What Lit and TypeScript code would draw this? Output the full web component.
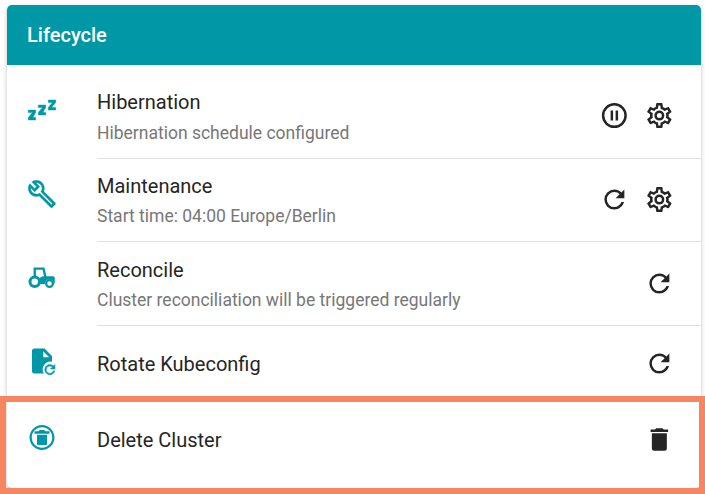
import { LitElement, html, css, svg, nothing } from "lit";
import { customElement, property } from "lit/decorators.js";

const cog = svg`<path d="M12,8A4,4 0 0,1 16,12A4,4 0 0,1 12,16A4,4 0 0,1 8,12A4,4 0 0,1 12,8M12,10A2,2 0 0,0 10,12A2,2 0 0,0 12,14A2,2 0 0,0 14,12A2,2 0 0,0 12,10M10,22C9.75,22 9.54,21.82 9.5,21.58L9.13,18.93C8.5,18.68 7.96,18.34 7.44,17.94L4.95,18.95C4.73,19.03 4.46,18.95 4.34,18.73L2.34,15.27C2.21,15.05 2.27,14.78 2.46,14.63L4.57,12.97L4.5,12L4.57,11L2.46,9.37C2.27,9.22 2.21,8.95 2.34,8.73L4.34,5.27C4.46,5.05 4.73,4.96 4.95,5.05L7.44,6.05C7.96,5.66 8.5,5.32 9.13,5.07L9.5,2.42C9.54,2.18 9.75,2 10,2H14C14.25,2 14.46,2.18 14.5,2.42L14.87,5.07C15.5,5.32 16.04,5.66 16.56,6.05L19.05,5.05C19.27,4.96 19.54,5.05 19.66,5.27L21.66,8.73C21.79,8.95 21.73,9.22 21.54,9.37L19.43,11L19.5,12L19.43,13L21.54,14.63C21.73,14.78 21.79,15.05 21.66,15.27L19.66,18.73C19.54,18.95 19.27,19.04 19.05,18.95L16.56,17.95C16.04,18.34 15.5,18.68 14.87,18.93L14.5,21.58C14.46,21.82 14.25,22 14,22H10M11.25,4L10.88,6.61C9.68,6.86 8.62,7.5 7.85,8.39L5.44,7.35L4.69,8.65L6.8,10.2C6.4,11.37 6.4,12.64 6.8,13.8L4.68,15.36L5.43,16.66L7.86,15.62C8.63,16.5 9.68,17.14 10.87,17.38L11.24,20H12.76L13.13,17.39C14.32,17.14 15.37,16.5 16.14,15.62L18.57,16.66L19.32,15.36L17.2,13.81C17.6,12.64 17.6,11.37 17.2,10.2L19.31,8.65L18.56,7.35L16.15,8.39C15.38,7.5 14.32,6.86 13.12,6.62L12.75,4H11.25Z"/>`;
const refresh = svg`<path d="M17.65,6.35C16.2,4.9 14.21,4 12,4A8,8 0 0,0 4,12A8,8 0 0,0 12,20C15.73,20 18.84,17.45 19.73,14H17.65C16.83,16.33 14.61,18 12,18A6,6 0 0,1 6,12A6,6 0 0,1 12,6C13.66,6 15.14,6.69 16.22,7.78L13,11H20V4L17.65,6.35Z"/>`;

const icons: Record<string, unknown> = {
  cog,
  refresh,
  pause: svg`<path d="M13,16V8H15V16H13M9,16V8H11V16H9M12,2A10,10 0 0,1 22,12A10,10 0 0,1 12,22A10,10 0 0,1 2,12A10,10 0 0,1 12,2M12,4A8,8 0 0,0 4,12A8,8 0 0,0 12,20A8,8 0 0,0 20,12A8,8 0 0,0 12,4Z"/>`,
  trash: svg`<path d="M19,4H15.5L14.5,3H9.5L8.5,4H5V6H19M6,19A2,2 0 0,0 8,21H16A2,2 0 0,0 18,19V7H6V19Z"/>`,
  sleep: svg`<path stroke="currentColor" stroke-width=".35" d="M23,12H17V10L20.39,6H17V4H23V6L19.62,10H23V12M15,16H9V14L12.39,10H9V8H15V10L12.62,14H15V16M7,20H1V18L4.39,14H1V12H7V14L4.62,18H7V20Z"/>`,
  wrench: svg`<path stroke="currentColor" stroke-width=".2" d="M22.61,19L13.53,9.91C14.46,7.57 14,4.81 12.09,2.91C9.79,0.61 6.21,0.4 3.66,2.26L7.5,6.11L6.08,7.52L2.25,3.69C0.39,6.23 0.6,9.82 2.9,12.11C4.76,13.97 7.47,14.46 9.79,13.59L18.9,22.7C19.29,23.09 19.92,23.09 20.31,22.7L22.61,20.4C23,20 23,19.39 22.61,19M19.61,20.59L10.15,11.13C9.54,11.58 8.86,11.85 8.15,11.94C6.79,12.12 5.36,11.72 4.32,10.68C3.37,9.74 2.93,8.5 3,7.26L6.09,10.35L10.33,6.11L7.24,3C8.48,2.95 9.73,3.39 10.68,4.33C11.76,5.41 12.17,6.9 11.92,8.29C11.8,9 11.5,9.66 11.04,10.25L20.5,19.7L19.61,20.59Z"/>`,
  tractor: svg`
    <path d="M6.2,11.5V4.8H13.2L14.8,12" fill="none" stroke="currentColor" stroke-width="1.9"/>
    <path d="M9.6,12.6L12.6,11H21.2L22.2,12V16.8H21.4A3.5,3.5 0 0 0 14.4,16.8V17.2H10.4Z"/>
    <path fill-rule="evenodd" d="M6.2,10.4A5,5 0 1 1 6.2,20.4A5,5 0 1 1 6.2,10.4M6.2,12.8A2.6,2.6 0 1 0 6.2,18A2.6,2.6 0 1 0 6.2,12.8Z"/>
    <path fill-rule="evenodd" d="M18,13.2A3.6,3.6 0 1 1 18,20.4A3.6,3.6 0 1 1 18,13.2M18,15A1.8,1.8 0 1 0 18,18.6A1.8,1.8 0 1 0 18,15Z"/>`,
  fileRefresh: svg`<path fill-rule="evenodd" d="M14,2H6A2,2 0 0,0 4,4V20A2,2 0 0,0 6,22H13.4A6.4,6.4 0 0 1 20,12.5V8L14,2M13,4.2L17.8,9H13V4.2Z"/><g transform="translate(18.3 18.9) scale(.5) translate(-12 -12)" stroke="currentColor" stroke-width="1.1">${refresh}</g>`,
  deleteCircle: svg`<path d="M12 20.2C16.5 20.2 20.2 16.5 20.2 12S16.5 3.8 12 3.8 3.8 7.5 3.8 12 7.5 20.2 12 20.2M12 2C17.5 2 22 6.5 22 12S17.5 22 12 22 2 17.5 2 12C2 6.5 6.5 2 12 2M18 6.9V9H6V6.9H9.2L10.2 6H13.8L14.8 6.9H18M9 18C8.4 18 8 17.6 8 17V9.8H16V17C16 17.6 15.6 18 15 18H9Z"/>`,
};

@customElement("mdi-icon")
class MdiIcon extends LitElement {
  @property() name = "";
  static styles = css`
    :host { display: block; width: 30px; height: 30px; flex: none; }
    .glyph { display: block; width: 30px; height: 30px; fill: currentColor; }
  `;
  render() {
    return html`<svg class="glyph" viewBox="0 0 24 24">${icons[this.name]}</svg>`;
  }
}

interface Row {
  icon: string;
  title: string;
  note?: string;
  actions: string[];
}

const rows: Row[] = [
  { icon: "sleep", title: "Hibernation", note: "Hibernation schedule configured", actions: ["pause", "cog"] },
  { icon: "wrench", title: "Maintenance", note: "Start time: 04:00 Europe/Berlin", actions: ["refresh", "cog"] },
  { icon: "tractor", title: "Reconcile", note: "Cluster reconciliation will be triggered regularly", actions: ["refresh"] },
  { icon: "fileRefresh", title: "Rotate Kubeconfig", actions: ["refresh"] },
  { icon: "deleteCircle", title: "Delete Cluster", actions: ["trash"] },
];

@customElement("app-root")
class AppRoot extends LitElement {
  static styles = css`
    :host {
      display: block; position: relative; box-sizing: border-box;
      width: 705px; height: 494px; padding: 5px 4px 6px 7px; overflow: hidden;
      background: #fff; font-family: Roboto, sans-serif; color: #252525;
    }
    .card {
      box-sizing: border-box; height: 483px; background: #fff; border-radius: 5px; overflow: hidden;
      box-shadow: 0 3px 1px -2px rgba(0,0,0,.2), 0 2px 3px rgba(0,0,0,.14), 0 1px 6px rgba(0,0,0,.12);
    }
    .head {
      box-sizing: border-box; height: 60px; padding: 0 20px; display: flex; align-items: center;
      background: #0097a7; color: #fff; font-size: 20px; font-weight: 500;
    }
    .list { padding-top: 10px; display: grid; grid-template-rows: 84px 83px 84px 76px 76px; }
    .row { display: flex; padding-left: 20px; }
    .lead { padding-top: 20px; width: 70px; color: #0097a7; }
    .row:nth-child(3) .lead, .row:nth-child(5) .lead { padding-top: 21px; }
    .row:nth-child(3) mdi-icon, .row:nth-child(5) mdi-icon { transform: translateY(-.4px); }
    .body {
      flex: 1; display: flex; padding-right: 27px;
      border-bottom: 1px solid #e0e0e0; box-sizing: border-box;
    }
    .row:last-child .body { border-bottom: 0; }
    .text { flex: 1; padding-top: 15px; }
    .row:nth-child(3) .text { padding-top: 16px; }
    .row:nth-child(4) .text { padding-top: 26px; }
    .row:nth-child(5) .text { padding-top: 26px; }
    .title { font-size: 20px; line-height: 24px; }
    .note { font-size: 17.5px; line-height: 21px; margin-top: 9px; color: #777; }
    .row:nth-child(2) .note, .row:nth-child(3) .note { margin-top: 8px; }
    .actions { display: flex; gap: 15px; padding-top: 25px; }
    .row:nth-child(3) .actions { padding-top: 26px; }
    .row:nth-child(4) .actions { padding-top: 22px; }
    .row:nth-child(5) .actions { padding-top: 22px; }
    .row .actions mdi-icon { transform: translate(.35px, .6px); }
    .highlight { position: absolute; left: 0; right: 0; top: 396px; bottom: 0; border: 6px solid #f5865f; }
  `;
  render() {
    return html`
      <div class="card">
        <div class="head">Lifecycle</div>
        <div class="list">
          ${rows.map((r) => html`
            <div class="row">
              <div class="lead"><mdi-icon name=${r.icon}></mdi-icon></div>
              <div class="body">
                <div class="text">
                  <div class="title">${r.title}</div>
                  ${r.note ? html`<div class="note">${r.note}</div>` : nothing}
                </div>
                <div class="actions">${r.actions.map((a) => html`<mdi-icon name=${a}></mdi-icon>`)}</div>
              </div>
            </div>`)}
        </div>
      </div>
      <div class="highlight"></div>
    `;
  }
}
